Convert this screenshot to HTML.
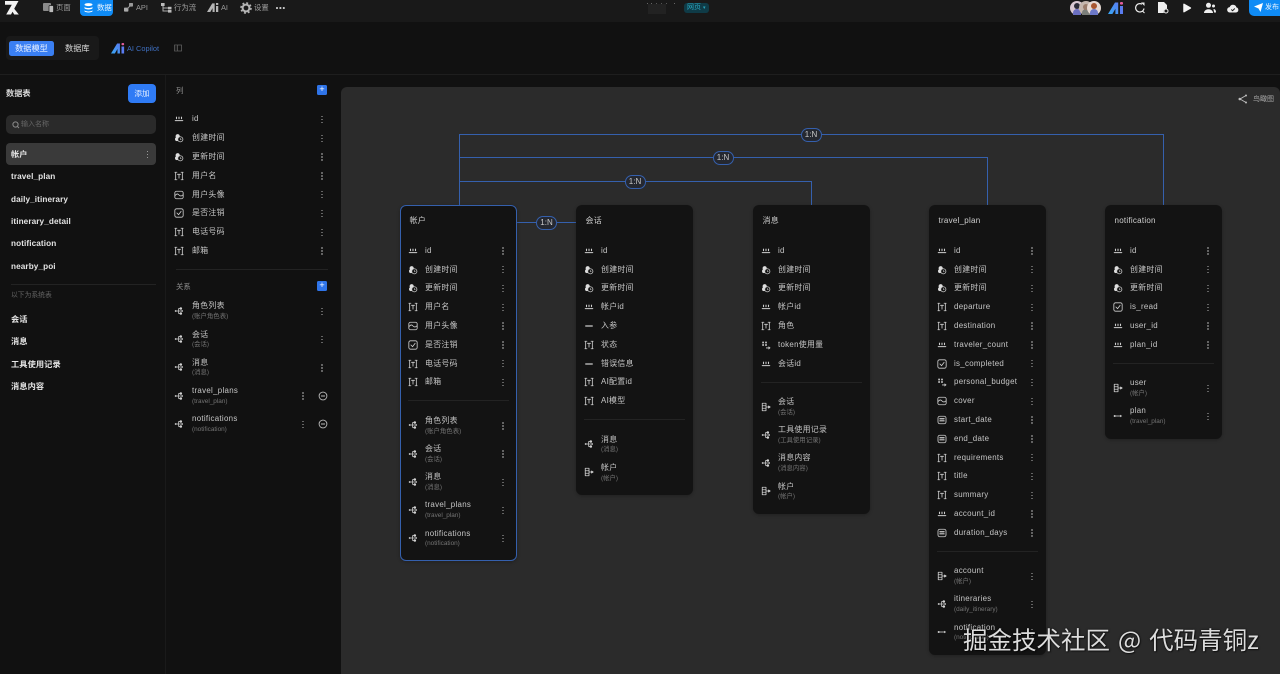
<!DOCTYPE html>
<html lang="zh"><head><meta charset="utf-8"><title>数据模型</title>
<style>
*{box-sizing:border-box;margin:0;padding:0}
html,body{width:1280px;height:674px;overflow:hidden;background:#111;font-family:"Liberation Sans","Noto Sans CJK SC",sans-serif;color:#ccc;font-size:8.2px}
.a{position:absolute;white-space:nowrap}
#top{position:absolute;left:0;top:0;width:1280px;height:22px;background:#191919}
#bar{position:absolute;left:0;top:22px;width:1280px;height:52.5px;background:#111;border-bottom:1px solid #1e1e1e}
#canvas{position:absolute;left:341px;top:87px;width:939px;height:587px;background:#2b2b2b;border-radius:6px 6px 0 0}
#vline{position:absolute;left:165px;top:75px;width:1px;height:599px;background:#1a1a1a}
.t{color:#9a9a9a;font-size:7.4px;top:2px;line-height:12px}
.s{color:#e4e4e4;font-weight:700;left:11px;font-size:8.2px;letter-spacing:.1px;line-height:12px;margin-top:.8px}
.c{position:absolute;width:117px;background:#131313;border-radius:6px;padding-top:36px;padding-bottom:8.6px;box-shadow:0 1px 3px rgba(0,0,0,.25)}
.c h4{position:absolute;left:9.500px;top:10px;font-weight:400;font-size:8px;letter-spacing:.25px;line-height:12px;color:#cfcfcf}
.r,.R{position:relative}
.r{height:18.8px}.R{height:28.2px}
.r svg,.R svg{position:absolute;left:8px;width:10px;height:10px;top:4.9px}
.R svg{top:9.1px}
.r span{position:absolute;left:25px;top:.8px;line-height:18.8px;white-space:nowrap;color:#c6c6c6;font-size:7.9px;letter-spacing:.3px}
.R span{position:absolute;left:25px;top:3.500px;line-height:11px;white-space:nowrap;color:#c6c6c6;font-size:7.9px;letter-spacing:.3px}
.R em{position:absolute;left:25px;top:15.200px;line-height:10px;font-style:normal;font-size:6.4px;white-space:nowrap;color:#747474}
.r i,.R i{position:absolute;right:13.3px;top:50%;margin-top:-.2px;width:1.4px;height:1.4px;background:#707070;box-shadow:0 -3px #707070,0 3px #707070;border-radius:50%}
.nd .r i{display:none}
.hr{height:1px;background:#232323;margin:9.1px 8px 9.9px 8px}
.p{position:absolute;left:166px;width:170px}
.p .r span,.p .R span,.p .R em{left:26px}
.p .r svg,.p .R svg{left:8px}
.b{position:absolute;width:21px;height:14px;border:1px solid #3560ad;border-radius:7px;background:#252830;color:#c8c8c8;font-size:8px;line-height:12px;text-align:center}
.l{position:absolute;background:#3560ad}
.plus{position:absolute;left:317px;width:10px;height:10px;background:#2f74e8;border-radius:1.5px;color:#fff;font-size:9px;line-height:9px;text-align:center}
svg{display:block}
.ic{fill:none;stroke:#cfcfcf;stroke-width:1;stroke-linecap:round;stroke-linejoin:round}
</style></head><body>
<svg width="0" height="0" style="position:absolute">
<defs>
<symbol id="num" viewBox="0 0 12 12"><g class="ic"><path d="M1.500 8h9" stroke-width="1.200"/><path d="M3 3.800v1.800M6 3.800v1.800M9 3.800v1.800" stroke-width="1.300"/></g></symbol>
<symbol id="time" viewBox="0 0 12 12"><circle cx="4.400" cy="3.800" r="2.500" fill="#ddd"/><circle cx="3.600" cy="7.400" r="2.400" fill="#ddd"/><circle cx="7.600" cy="7.600" r="3.100" fill="#131313" stroke="#ccc" stroke-width=".9"/><path d="M7.600 6.100v1.600h1.300" fill="none" stroke="#ccc" stroke-width=".7"/></symbol>
<symbol id="txt" viewBox="0 0 12 12"><g class="ic"><path d="M1 1.500h2.500M8.500 1.500h2.500M1 10.500h2.500M8.500 10.500h2.500M2 1.500v9M10 1.500v9M4.200 4h3.600M6 4v4.500"/></g></symbol>
<symbol id="img" viewBox="0 0 12 12"><g class="ic"><rect x="1" y="1.500" width="10" height="9" rx="2"/><path d="M1.500 6.500c2-2.500 3-2 4.500-.5s3 1.500 4.500 0"/></g></symbol>
<symbol id="chk" viewBox="0 0 12 12"><g class="ic"><rect x="1" y="1" width="10" height="10" rx="2"/><path d="M3.500 6l2 2 3-4"/></g></symbol>
<symbol id="rel" viewBox="0 0 12 12"><g fill="none" stroke="#cfcfcf" stroke-width=".9"><path d="M2 6h3.500M5.500 6V3.200h3M5.500 6v2.800h3M5.500 6h4"/></g><g fill="#d2d2d2"><circle cx="2" cy="6" r="1.100"/><circle cx="8.200" cy="3" r="1.500"/><circle cx="8.200" cy="9" r="1.500"/><circle cx="9.800" cy="6" r="1"/></g></symbol>
<symbol id="bel" viewBox="0 0 12 12"><g class="ic"><path d="M1.500 1.500h4.500v9H1.500zM1.500 4.500h4.500M1.500 7.500h4.500M6 6h3"/><path d="M9 4.800L11 6 9 7.200z" fill="#ccc"/></g></symbol>
<symbol id="dash" viewBox="0 0 12 12"><path d="M1.500 6h9" stroke="#ccc" stroke-width="1.500"/></symbol>
<symbol id="arr" viewBox="0 0 12 12"><path d="M2 6h8" stroke="#ccc" stroke-width="1"/><circle cx="2" cy="6" r="1.200" fill="#ccc"/><path d="M8.500 4.500L11 6 8.500 7.500z" fill="#ccc"/></symbol>
<symbol id="date" viewBox="0 0 12 12"><g class="ic"><rect x="1.200" y="1.500" width="9.600" height="9" rx="2.200"/><path d="M3.500 4.500h5M3.500 7h5" stroke-width="1.400"/></g></symbol>
<symbol id="flt" viewBox="0 0 12 12"><g fill="#ccc"><rect x="1.500" y="2" width="2" height="2"/><rect x="5" y="2" width="2" height="2"/><rect x="1.500" y="5" width="2" height="2"/><rect x="5" y="5" width="2" height="2"/><path d="M6 9h3V7.500l2.500 2-2.500 2V10H6z"/></g></symbol>
<linearGradient id="ag" x1="0" y1="1" x2="1" y2="0"><stop offset="0" stop-color="#37a8f5"/><stop offset="1" stop-color="#5a7cf0"/></linearGradient>
<symbol id="ai" viewBox="0 0 16 12"><path d="M0 12L7 .5h3.200V12H7.400V6.800L4.400 12z" fill="url(#ag)"/><rect x="12" y="0" width="3" height="2.600" rx="1" fill="#e35d9c"/><rect x="12" y="4" width="3" height="8" fill="#5a7cf0"/></symbol>
</defs></svg>

<div id="top"></div>
<!-- logo -->
<svg class="a" style="left:4px;top:0" width="16" height="16" viewBox="0 0 16 16"><path d="M1 1h13.500L7 14.500H2.200L7.800 4.800H1z" fill="#f2f2f2"/><path d="M9.800 8.200l5 6.300h-4.600L8 10.800z" fill="#f2f2f2"/></svg>
<svg class="a" style="left:43px;top:2px" width="11" height="11" viewBox="0 0 11 11"><rect y="1" width="8" height="8" rx="1" fill="#8a8a8a"/><rect x="6" y="3.500" width="4.500" height="7" rx="1" fill="#bbb" stroke="#191919" stroke-width=".7"/></svg>
<div class="a t" style="left:56px">页面</div>
<div class="a" style="left:80px;top:0;width:33px;height:16px;background:#0f8bf5;border-radius:0 0 4px 4px"></div>
<svg class="a" style="left:84px;top:3px" width="9" height="10" viewBox="0 0 9 10"><ellipse cx="4.500" cy="1.600" rx="4" ry="1.500" fill="#fff"/><path d="M.5 4c1.500 1.400 6.500 1.400 8 0v1.400c-1.500 1.400-6.500 1.400-8 0zM.5 7.400c1.500 1.400 6.500 1.400 8 0v1c-1.500 1.400-6.500 1.400-8 0z" fill="#fff"/></svg>
<div class="a t" style="left:97px;color:#e8f3ff">数据</div>
<svg class="a" style="left:124px;top:3px" width="9" height="9" viewBox="0 0 9 9"><rect x="5" y="0" width="4" height="3.600" rx=".7" fill="#999"/><rect x="0" y="4.600" width="4.400" height="4" rx=".7" fill="#aaa"/><path d="M3 6L6.500 2.500" stroke="#999"/></svg>
<div class="a t" style="left:136px">API</div>
<svg class="a" style="left:161px;top:3px" width="11" height="10" viewBox="0 0 11 10"><g fill="none" stroke="#aaa"><path d="M2 2v6h5M2 5h6"/></g><rect x="0" y="0" width="3.600" height="3" fill="#bbb"/><rect x="7" y="3.800" width="3.500" height="2.600" fill="#bbb"/><rect x="7" y="7" width="3.500" height="2.600" fill="#bbb"/></svg>
<div class="a t" style="left:174px">行为流</div>
<svg class="a" style="left:207px;top:3px" width="12" height="9" viewBox="0 0 16 12"><path d="M0 12L7 .5h3.200V12H7.400V6.800L4.400 12z" fill="#b5b5b5"/><rect x="12" y="0" width="3" height="2.600" fill="#b5b5b5"/><rect x="12" y="4" width="3" height="8" fill="#b5b5b5"/></svg>
<div class="a t" style="left:221px">AI</div>
<svg class="a" style="left:240px;top:2px" width="12" height="12" viewBox="0 0 12 12"><circle cx="6" cy="6" r="3.400" fill="none" stroke="#b5b5b5" stroke-width="2"/><circle cx="6" cy="6" r="5" fill="none" stroke="#b5b5b5" stroke-width="1.600" stroke-dasharray="2 1.930"/></svg>
<div class="a t" style="left:254px">设置</div>
<div class="a" style="left:276px;top:7px;width:1.600px;height:1.600px;background:#ccc;border-radius:50%;box-shadow:3.400px 0 #ccc,6.800px 0 #ccc"></div>
<!-- centre -->
<div class="a" style="left:648px;top:4px;width:18px;height:10px;background:#222"></div>
<div class="a" style="left:647px;top:3px;width:1px;height:1px;background:#666;box-shadow:4px 0 #666,9px 0 #555,14px 0 #555,19px 0 #555,27px 0 #666"></div>
<div class="a" style="left:684px;top:3px;width:25px;height:10px;background:#0f3b47;border-radius:3px;color:#2aa5bd;font-size:7px;line-height:10px;padding-left:3px">网页 <span style="font-size:5px">▾</span></div>
<!-- right -->
<div class="a" style="left:1070px;top:1px;width:14px;height:14px;border-radius:50%;background:#d9c9d2"><div style="position:absolute;left:3px;top:8px;width:8px;height:6px;background:#6b6fc0;border-radius:4px 4px 0 0"></div><div style="position:absolute;left:4px;top:2px;width:6px;height:6px;background:#2c2c38;border-radius:50%"></div></div>
<div class="a" style="left:1079px;top:1px;width:14px;height:14px;border-radius:50%;background:#c4b6ad"><div style="position:absolute;left:3px;top:8px;width:8px;height:6px;background:#7c7f7a;border-radius:4px 4px 0 0"></div><div style="position:absolute;left:4px;top:3px;width:6px;height:6px;background:#9a7c6b;border-radius:50%"></div></div>
<div class="a" style="left:1087px;top:1px;width:14px;height:14px;border-radius:50%;background:#e6d9d2"><div style="position:absolute;left:3px;top:8px;width:8px;height:6px;background:#6c78c8;border-radius:4px 4px 0 0"></div><div style="position:absolute;left:4px;top:2px;width:6px;height:6px;background:#a8562f;border-radius:50%"></div></div>
<svg class="a" style="left:1108px;top:2px" width="16" height="12" viewBox="0 0 16 12"><use href="#ai"/></svg>
<svg class="a" style="left:1134px;top:2px" width="12" height="12" viewBox="0 0 12 12"><path d="M10 6.500A4.200 4.200 0 1 1 8 2.200" fill="none" stroke="#eee" stroke-width="1.200"/><path d="M7 .5h3.500V4z" fill="#eee"/><path d="M8.500 9l2 2" stroke="#eee"/></svg>
<svg class="a" style="left:1158px;top:2px" width="11" height="12" viewBox="0 0 11 12"><path d="M0 0h6l3 3v3.500a3 3 0 0 0-3 4.500H0z" fill="#eee"/><circle cx="8" cy="9" r="2" fill="none" stroke="#eee"/></svg>
<svg class="a" style="left:1182px;top:3px" width="10" height="10" viewBox="0 0 11 12"><path d="M1 1.500c0-.8.700-1 1.400-.6l7.600 4.300c.6.400.6 1.200 0 1.600L2.400 11.100C1.700 11.500 1 11.300 1 10.500z" fill="#f2f2f2"/></svg>
<svg class="a" style="left:1204px;top:2px" width="12" height="12" viewBox="0 0 12 12"><circle cx="4.500" cy="3.300" r="2.500" fill="#eee"/><path d="M0 11c0-5 9-5 9 0z" fill="#eee"/><circle cx="9.500" cy="4" r="1.500" fill="#eee"/><path d="M9.500 7c1.500 0 2.500 1 2.500 3.500H10z" fill="#eee"/></svg>
<svg class="a" style="left:1227px;top:3px" width="12" height="10" viewBox="0 0 12 10"><path d="M3 9.500a2.700 2.700 0 0 1-.3-5.400 3.500 3.500 0 0 1 6.700.3A2.600 2.600 0 0 1 9 9.500z" fill="#eee"/><path d="M4.300 6.500l1.300 1.200 2.200-2.200" fill="none" stroke="#191919" stroke-width=".9"/></svg>
<div class="a" style="left:1249px;top:0;width:31px;height:16px;background:#0f8bf5;border-radius:0 0 0 5px"></div>
<svg class="a" style="left:1254px;top:3px" width="9" height="9" viewBox="0 0 9 9"><path d="M0 3.500L9 0 6.500 9 4.500 5.500z" fill="#fff"/></svg>
<div class="a t" style="left:1265px;color:#e8f3ff;font-size:7px">发布</div>

<div id="bar"></div>
<div class="a" style="left:6px;top:36px;width:93px;height:24px;background:#191919;border-radius:4px"></div>
<div class="a" style="left:9px;top:40.500px;width:45px;height:15.500px;background:#3a7ff2;border-radius:2.500px;color:#e9f1ff;text-align:center;line-height:15.500px;font-size:8.200px">数据模型</div>
<div class="a" style="left:65px;top:42.500px;line-height:12px;color:#d8d8d8;font-size:8.200px">数据库</div>
<svg class="a" style="left:111px;top:43px" width="14" height="10.500" viewBox="0 0 16 12"><use href="#ai"/></svg>
<div class="a" style="left:127px;top:42.500px;line-height:12px;color:#3f6fc0;font-size:7.400px">AI Copilot</div>
<svg class="a" style="left:174px;top:44px" width="8" height="8" viewBox="0 0 8 8"><path d="M.5 1h7v6h-7zM3.500 1v6M1.500 3h1M1.500 5h1" fill="none" stroke="#5e5e5e" stroke-width=".8"/></svg>

<div id="vline"></div>
<!-- left sidebar -->
<div class="a" style="left:6px;top:88px;font-weight:700;line-height:12px;color:#d8d8d8">数据表</div>
<div class="a" style="left:128px;top:84px;width:28px;height:19px;background:#2f7bf5;border-radius:4px;color:#e5efff;text-align:center;line-height:19px;font-size:7.600px">添加</div>
<div class="a" style="left:6px;top:115px;width:150px;height:19px;background:#2a2a2a;border-radius:5px"></div>
<svg class="a" style="left:12px;top:120.500px" width="8" height="8" viewBox="0 0 8 8"><circle cx="3.500" cy="3.500" r="2.600" fill="none" stroke="#8a8a8a"/><path d="M5.500 5.500L7 7" stroke="#8a8a8a"/></svg>
<div class="a" style="left:21px;top:119px;line-height:12px;color:#666;font-size:7px">输入名称</div>
<div class="a" style="left:6px;top:143px;width:150px;height:22px;background:#3a3a3a;border-radius:4px"></div>
<div class="a" style="left:146.500px;top:153.500px;width:1.400px;height:1.400px;background:#999;box-shadow:0 -3px #999,0 3px #999"></div>
<div class="a s" style="top:148px">帐户</div>
<div class="a s" style="top:170px">travel_plan</div>
<div class="a s" style="top:193px">daily_itinerary</div>
<div class="a s" style="top:215px">itinerary_detail</div>
<div class="a s" style="top:237px">notification</div>
<div class="a s" style="top:260px">nearby_poi</div>
<div class="a" style="left:11px;top:284px;width:145px;height:1px;background:#232323"></div>
<div class="a" style="left:11px;top:290px;line-height:12px;color:#646464;font-size:6.800px">以下为系统表</div>
<div class="a s" style="top:313px">会话</div>
<div class="a s" style="top:335px">消息</div>
<div class="a s" style="top:358px">工具使用记录</div>
<div class="a s" style="top:380px">消息内容</div>

<!-- column panel -->
<div class="a" style="left:176px;top:85px;line-height:12px;color:#8e8e8e;font-size:7.400px">列</div>
<div class="plus" style="top:85px">+</div>
<div class="p" style="top:109.600px">
<div class="r"><svg><use href="#num"/></svg><span>id</span><i></i></div>
<div class="r"><svg><use href="#time"/></svg><span>创建时间</span><i></i></div>
<div class="r"><svg><use href="#time"/></svg><span>更新时间</span><i></i></div>
<div class="r"><svg><use href="#txt"/></svg><span>用户名</span><i></i></div>
<div class="r"><svg><use href="#img"/></svg><span>用户头像</span><i></i></div>
<div class="r"><svg><use href="#chk"/></svg><span>是否注销</span><i></i></div>
<div class="r"><svg><use href="#txt"/></svg><span>电话号码</span><i></i></div>
<div class="r"><svg><use href="#txt"/></svg><span>邮箱</span><i></i></div>
</div>
<div class="a" style="left:176px;top:269px;width:152px;height:1px;background:#232323"></div>
<div class="a" style="left:176px;top:281px;line-height:12px;color:#8e8e8e;font-size:7.400px">关系</div>
<div class="plus" style="top:281px">+</div>
<div class="p" style="top:296.900px">
<div class="R"><svg><use href="#rel"/></svg><span>角色列表</span><em>(账户角色表)</em><i></i></div>
<div class="R"><svg><use href="#rel"/></svg><span>会话</span><em>(会话)</em><i></i></div>
<div class="R"><svg><use href="#rel"/></svg><span>消息</span><em>(消息)</em><i></i></div>
<div class="R"><svg><use href="#rel"/></svg><span>travel_plans</span><em>(travel_plan)</em><i style="right:32.300px"></i><svg style="left:152px;top:9.100px" viewBox="0 0 10 10"><circle cx="5" cy="5" r="3.900" fill="none" stroke="#bbb" stroke-width=".9"/><path d="M3 5h4" stroke="#bbb"/></svg></div>
<div class="R"><svg><use href="#rel"/></svg><span>notifications</span><em>(notification)</em><i style="right:32.300px"></i><svg style="left:152px;top:9.100px" viewBox="0 0 10 10"><circle cx="5" cy="5" r="3.900" fill="none" stroke="#bbb" stroke-width=".9"/><path d="M3 5h4" stroke="#bbb"/></svg></div>
</div>

<!-- canvas -->
<div id="canvas"></div>
<svg class="a" style="left:1238px;top:94px" width="10" height="10" viewBox="0 0 10 10"><path d="M2 5l6-3.500M2 5l6 3.500" fill="none" stroke="#bdbdbd" stroke-width=".9"/><circle cx="1.800" cy="5" r="1.300" fill="#bdbdbd"/><circle cx="8" cy="1.500" r="1" fill="#bdbdbd"/><circle cx="8" cy="8.500" r="1" fill="#bdbdbd"/></svg>
<div class="a" style="left:1253px;top:93.500px;line-height:12px;color:#a8a8a8;font-size:7px">鸟瞰图</div>

<!-- connectors -->
<div class="l" style="left:458.500px;top:134px;width:1px;height:71px"></div>
<div class="l" style="left:459px;top:134px;width:705px;height:1px"></div>
<div class="l" style="left:1163px;top:134px;width:1px;height:71px"></div>
<div class="l" style="left:459px;top:157px;width:529px;height:1px"></div>
<div class="l" style="left:987px;top:157px;width:1px;height:48px"></div>
<div class="l" style="left:459px;top:181px;width:352px;height:1px"></div>
<div class="l" style="left:810.500px;top:181px;width:1px;height:24px"></div>
<div class="l" style="left:517px;top:222px;width:59px;height:1px"></div>
<div class="b" style="left:800.500px;top:127.500px">1:N</div>
<div class="b" style="left:712.500px;top:151px">1:N</div>
<div class="b" style="left:624.500px;top:174.500px">1:N</div>
<div class="b" style="left:536px;top:215.500px">1:N</div>

<!-- card 1 -->
<div class="c" style="left:400px;top:205px;outline:1.200px solid #3560ad;outline-offset:-1px;border-radius:6px"><h4>帐户</h4>
<div class="r"><svg><use href="#num"/></svg><span>id</span><i></i></div>
<div class="r"><svg><use href="#time"/></svg><span>创建时间</span><i></i></div>
<div class="r"><svg><use href="#time"/></svg><span>更新时间</span><i></i></div>
<div class="r"><svg><use href="#txt"/></svg><span>用户名</span><i></i></div>
<div class="r"><svg><use href="#img"/></svg><span>用户头像</span><i></i></div>
<div class="r"><svg><use href="#chk"/></svg><span>是否注销</span><i></i></div>
<div class="r"><svg><use href="#txt"/></svg><span>电话号码</span><i></i></div>
<div class="r"><svg><use href="#txt"/></svg><span>邮箱</span><i></i></div>
<div class="hr"></div>
<div class="R"><svg><use href="#rel"/></svg><span>角色列表</span><em>(账户角色表)</em><i></i></div>
<div class="R"><svg><use href="#rel"/></svg><span>会话</span><em>(会话)</em><i></i></div>
<div class="R"><svg><use href="#rel"/></svg><span>消息</span><em>(消息)</em><i></i></div>
<div class="R"><svg><use href="#rel"/></svg><span>travel_plans</span><em>(travel_plan)</em><i></i></div>
<div class="R"><svg><use href="#rel"/></svg><span>notifications</span><em>(notification)</em><i></i></div>
</div>

<!-- card 2 -->
<div class="c nd" style="left:576px;top:205px"><h4>会话</h4>
<div class="r"><svg><use href="#num"/></svg><span>id</span></div>
<div class="r"><svg><use href="#time"/></svg><span>创建时间</span></div>
<div class="r"><svg><use href="#time"/></svg><span>更新时间</span></div>
<div class="r"><svg><use href="#num"/></svg><span>帐户id</span></div>
<div class="r"><svg><use href="#dash"/></svg><span>入参</span></div>
<div class="r"><svg><use href="#txt"/></svg><span>状态</span></div>
<div class="r"><svg><use href="#dash"/></svg><span>错误信息</span></div>
<div class="r"><svg><use href="#txt"/></svg><span>AI配置id</span></div>
<div class="r"><svg><use href="#txt"/></svg><span>AI模型</span></div>
<div class="hr"></div>
<div class="R"><svg><use href="#rel"/></svg><span>消息</span><em>(消息)</em></div>
<div class="R"><svg><use href="#bel"/></svg><span>帐户</span><em>(帐户)</em></div>
</div>

<!-- card 3 -->
<div class="c nd" style="left:753px;top:205px"><h4>消息</h4>
<div class="r"><svg><use href="#num"/></svg><span>id</span></div>
<div class="r"><svg><use href="#time"/></svg><span>创建时间</span></div>
<div class="r"><svg><use href="#time"/></svg><span>更新时间</span></div>
<div class="r"><svg><use href="#num"/></svg><span>帐户id</span></div>
<div class="r"><svg><use href="#txt"/></svg><span>角色</span></div>
<div class="r"><svg><use href="#flt"/></svg><span>token使用量</span></div>
<div class="r"><svg><use href="#num"/></svg><span>会话id</span></div>
<div class="hr"></div>
<div class="R"><svg><use href="#bel"/></svg><span>会话</span><em>(会话)</em></div>
<div class="R"><svg><use href="#rel"/></svg><span>工具使用记录</span><em>(工具使用记录)</em></div>
<div class="R"><svg><use href="#rel"/></svg><span>消息内容</span><em>(消息内容)</em></div>
<div class="R"><svg><use href="#bel"/></svg><span>帐户</span><em>(帐户)</em></div>
</div>

<!-- card 4 -->
<div class="c" style="left:929px;top:205px"><h4>travel_plan</h4>
<div class="r"><svg><use href="#num"/></svg><span>id</span><i></i></div>
<div class="r"><svg><use href="#time"/></svg><span>创建时间</span><i></i></div>
<div class="r"><svg><use href="#time"/></svg><span>更新时间</span><i></i></div>
<div class="r"><svg><use href="#txt"/></svg><span>departure</span><i></i></div>
<div class="r"><svg><use href="#txt"/></svg><span>destination</span><i></i></div>
<div class="r"><svg><use href="#num"/></svg><span>traveler_count</span><i></i></div>
<div class="r"><svg><use href="#chk"/></svg><span>is_completed</span><i></i></div>
<div class="r"><svg><use href="#flt"/></svg><span>personal_budget</span><i></i></div>
<div class="r"><svg><use href="#img"/></svg><span>cover</span><i></i></div>
<div class="r"><svg><use href="#date"/></svg><span>start_date</span><i></i></div>
<div class="r"><svg><use href="#date"/></svg><span>end_date</span><i></i></div>
<div class="r"><svg><use href="#txt"/></svg><span>requirements</span><i></i></div>
<div class="r"><svg><use href="#txt"/></svg><span>title</span><i></i></div>
<div class="r"><svg><use href="#txt"/></svg><span>summary</span><i></i></div>
<div class="r"><svg><use href="#num"/></svg><span>account_id</span><i></i></div>
<div class="r"><svg><use href="#date"/></svg><span>duration_days</span><i></i></div>
<div class="hr"></div>
<div class="R"><svg><use href="#bel"/></svg><span>account</span><em>(帐户)</em><i></i></div>
<div class="R"><svg><use href="#rel"/></svg><span>itineraries</span><em>(daily_itinerary)</em><i></i></div>
<div class="R"><svg><use href="#arr"/></svg><span>notification</span><em>(notification)</em><i></i></div>
</div>

<!-- card 5 -->
<div class="c" style="left:1105px;top:205px"><h4>notification</h4>
<div class="r"><svg><use href="#num"/></svg><span>id</span><i></i></div>
<div class="r"><svg><use href="#time"/></svg><span>创建时间</span><i></i></div>
<div class="r"><svg><use href="#time"/></svg><span>更新时间</span><i></i></div>
<div class="r"><svg><use href="#chk"/></svg><span>is_read</span><i></i></div>
<div class="r"><svg><use href="#num"/></svg><span>user_id</span><i></i></div>
<div class="r"><svg><use href="#num"/></svg><span>plan_id</span><i></i></div>
<div class="hr"></div>
<div class="R"><svg><use href="#bel"/></svg><span>user</span><em>(帐户)</em><i></i></div>
<div class="R"><svg><use href="#arr"/></svg><span>plan</span><em>(travel_plan)</em><i></i></div>
</div>

<!-- watermark -->
<div class="a" style="left:963px;top:625px;font-family:'Noto Sans CJK SC',sans-serif;font-size:24.500px;word-spacing:2.500px;line-height:30px;color:#dcdcdc;text-shadow:0 0 2px rgba(0,0,0,.7),1px 1px 1px rgba(0,0,0,.5)">掘金技术社区 @ 代码青铜z</div>
</body></html>
